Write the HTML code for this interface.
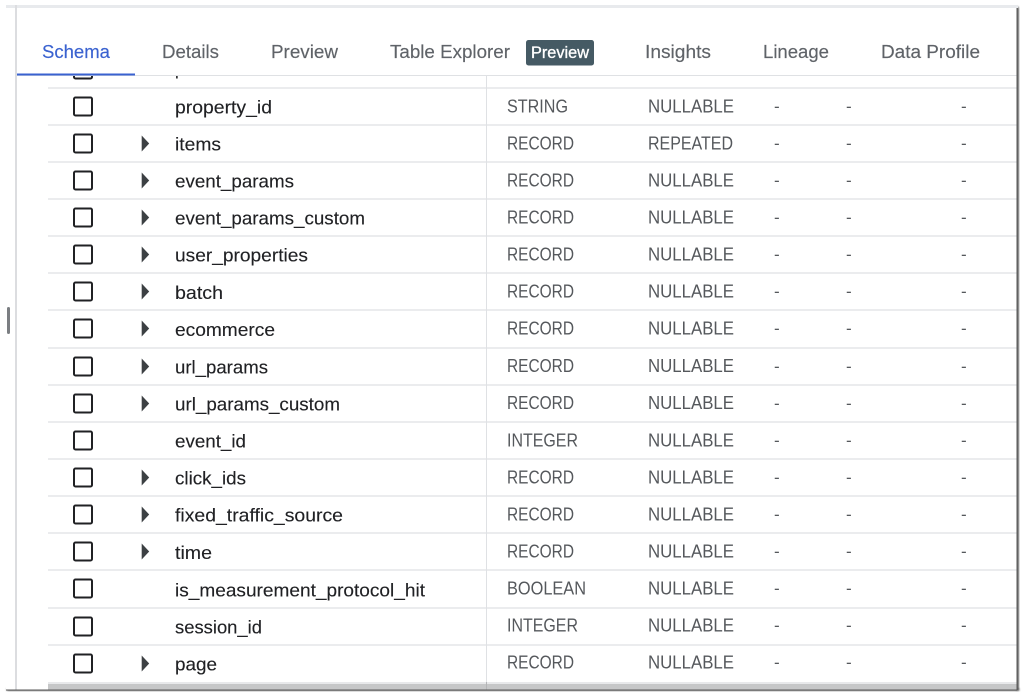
<!DOCTYPE html>
<html lang="en">
<head>
<meta charset="utf-8">
<title>Schema</title>
<style>
html,body{margin:0;padding:0;background:#fff;width:1024px;height:696px;overflow:hidden}
svg{display:block}
text{font-family:"Liberation Sans",sans-serif}
.tab{font-size:18.5px;fill:#5f6368;stroke:#5f6368;stroke-width:.15px}
.n{font-size:18px;fill:#202124;stroke:#202124;stroke-width:.12px;transform:translateY(.6px)}
.t{font-size:18.5px;fill:#55585c;transform:translateY(.4px)}
.d{font-size:17px;fill:#55585c}
.l{stroke:#dfe1e4;stroke-width:1.2}
</style>
</head>
<body>
<svg width="1024" height="696" viewBox="0 0 1024 696" xmlns="http://www.w3.org/2000/svg">
<defs>
<filter id="sh" x="-2%" y="-2%" width="104%" height="104%"><feGaussianBlur stdDeviation="1"/></filter>
<g id="c"><rect x="74" y="9.5" width="18" height="18" rx="1.5" fill="#fff" stroke="#202124" stroke-width="2"/></g>
<path id="a" d="M141.7 10.5 L149.2 18.5 L141.7 26.5 Z" fill="#3c4043"/>
<clipPath id="top"><rect x="16" y="76" width="1000" height="14"/></clipPath>
</defs>

<!-- window -->
<rect x="6" y="5" width="1012" height="3" fill="#e8eaed"/>
<rect x="7" y="688" width="1012" height="3" fill="#555" filter="url(#sh)"/>
<rect x="1016" y="7" width="3" height="683" fill="#555" filter="url(#sh)"/>
<rect x="6" y="7" width="1011" height="683" fill="#fff"/>
<rect x="6" y="5" width="1012" height="3" fill="#e8eaed"/>
<rect x="15" y="5" width="2" height="685" fill="#dcdde0"/>
<rect x="7" y="307" width="3" height="27" rx="1.5" fill="#7b7e82"/>

<!-- tabs -->
<text class="tab" x="42" y="58" textLength="68" lengthAdjust="spacingAndGlyphs" style="fill:#3a62d0;stroke:#3a62d0">Schema</text>
<text class="tab" x="162" y="58" textLength="57" lengthAdjust="spacingAndGlyphs">Details</text>
<text class="tab" x="271" y="58" textLength="67" lengthAdjust="spacingAndGlyphs">Preview</text>
<text class="tab" x="390" y="58" textLength="120" lengthAdjust="spacingAndGlyphs">Table Explorer</text>
<rect x="526" y="40" width="68" height="25.5" rx="2.5" fill="#455a64"/>
<text x="531" y="58" font-size="16.5" fill="#fff" stroke="#fff" stroke-width=".35" textLength="58" lengthAdjust="spacingAndGlyphs">Preview</text>
<text class="tab" x="645" y="58" textLength="66" lengthAdjust="spacingAndGlyphs">Insights</text>
<text class="tab" x="763" y="58" textLength="66" lengthAdjust="spacingAndGlyphs">Lineage</text>
<text class="tab" x="881" y="58" textLength="99" lengthAdjust="spacingAndGlyphs">Data Profile</text>
<rect x="17" y="75" width="1000" height="1" fill="#dfe1e4"/>
<rect x="17" y="73.5" width="118" height="2" fill="#3a62d0"/>

<!-- clipped top row -->
<g clip-path="url(#top)">
<use href="#c" y="51"/>
<text class="n" x="175" y="74" textLength="47" lengthAdjust="spacingAndGlyphs">parent</text>
</g>

<!-- rows -->
<g transform="translate(0,88)"><line class="l" x1="48" x2="1017" y1="0" y2="0"/><use href="#c"/><text class="n" x="175" y="25" textLength="97" lengthAdjust="spacingAndGlyphs">property_id</text><text class="t" x="507" y="24" textLength="61" lengthAdjust="spacingAndGlyphs">STRING</text><text class="t" x="648" y="24" textLength="86" lengthAdjust="spacingAndGlyphs">NULLABLE</text><text class="d" x="774" y="24">-</text><text class="d" x="846" y="24">-</text><text class="d" x="961" y="24">-</text></g>
<g transform="translate(0,125)"><line class="l" x1="48" x2="1017" y1="0" y2="0"/><use href="#c"/><use href="#a"/><text class="n" x="175" y="25" textLength="46" lengthAdjust="spacingAndGlyphs">items</text><text class="t" x="507" y="24" textLength="67" lengthAdjust="spacingAndGlyphs">RECORD</text><text class="t" x="648" y="24" textLength="85" lengthAdjust="spacingAndGlyphs">REPEATED</text><text class="d" x="774" y="24">-</text><text class="d" x="846" y="24">-</text><text class="d" x="961" y="24">-</text></g>
<g transform="translate(0,162)"><line class="l" x1="48" x2="1017" y1="0" y2="0"/><use href="#c"/><use href="#a"/><text class="n" x="175" y="25" textLength="119" lengthAdjust="spacingAndGlyphs">event_params</text><text class="t" x="507" y="24" textLength="67" lengthAdjust="spacingAndGlyphs">RECORD</text><text class="t" x="648" y="24" textLength="86" lengthAdjust="spacingAndGlyphs">NULLABLE</text><text class="d" x="774" y="24">-</text><text class="d" x="846" y="24">-</text><text class="d" x="961" y="24">-</text></g>
<g transform="translate(0,199)"><line class="l" x1="48" x2="1017" y1="0" y2="0"/><use href="#c"/><use href="#a"/><text class="n" x="175" y="25" textLength="190" lengthAdjust="spacingAndGlyphs">event_params_custom</text><text class="t" x="507" y="24" textLength="67" lengthAdjust="spacingAndGlyphs">RECORD</text><text class="t" x="648" y="24" textLength="86" lengthAdjust="spacingAndGlyphs">NULLABLE</text><text class="d" x="774" y="24">-</text><text class="d" x="846" y="24">-</text><text class="d" x="961" y="24">-</text></g>
<g transform="translate(0,236)"><line class="l" x1="48" x2="1017" y1="0" y2="0"/><use href="#c"/><use href="#a"/><text class="n" x="175" y="25" textLength="133" lengthAdjust="spacingAndGlyphs">user_properties</text><text class="t" x="507" y="24" textLength="67" lengthAdjust="spacingAndGlyphs">RECORD</text><text class="t" x="648" y="24" textLength="86" lengthAdjust="spacingAndGlyphs">NULLABLE</text><text class="d" x="774" y="24">-</text><text class="d" x="846" y="24">-</text><text class="d" x="961" y="24">-</text></g>
<g transform="translate(0,273)"><line class="l" x1="48" x2="1017" y1="0" y2="0"/><use href="#c"/><use href="#a"/><text class="n" x="175" y="25.5" textLength="48" lengthAdjust="spacingAndGlyphs">batch</text><text class="t" x="507" y="24" textLength="67" lengthAdjust="spacingAndGlyphs">RECORD</text><text class="t" x="648" y="24" textLength="86" lengthAdjust="spacingAndGlyphs">NULLABLE</text><text class="d" x="774" y="24">-</text><text class="d" x="846" y="24">-</text><text class="d" x="961" y="24">-</text></g>
<g transform="translate(0,310)"><line class="l" x1="48" x2="1017" y1="0" y2="0"/><use href="#c"/><use href="#a"/><text class="n" x="175" y="25.5" textLength="100" lengthAdjust="spacingAndGlyphs">ecommerce</text><text class="t" x="507" y="24" textLength="67" lengthAdjust="spacingAndGlyphs">RECORD</text><text class="t" x="648" y="24" textLength="86" lengthAdjust="spacingAndGlyphs">NULLABLE</text><text class="d" x="774" y="24">-</text><text class="d" x="846" y="24">-</text><text class="d" x="961" y="24">-</text></g>
<g transform="translate(0,348)"><line class="l" x1="48" x2="1017" y1="0" y2="0"/><use href="#c"/><use href="#a"/><text class="n" x="175" y="25" textLength="93" lengthAdjust="spacingAndGlyphs">url_params</text><text class="t" x="507" y="23.5" textLength="67" lengthAdjust="spacingAndGlyphs">RECORD</text><text class="t" x="648" y="23.5" textLength="86" lengthAdjust="spacingAndGlyphs">NULLABLE</text><text class="d" x="774" y="24">-</text><text class="d" x="846" y="24">-</text><text class="d" x="961" y="24">-</text></g>
<g transform="translate(0,385)"><line class="l" x1="48" x2="1017" y1="0" y2="0"/><use href="#c"/><use href="#a"/><text class="n" x="175" y="25" textLength="165" lengthAdjust="spacingAndGlyphs">url_params_custom</text><text class="t" x="507" y="23.5" textLength="67" lengthAdjust="spacingAndGlyphs">RECORD</text><text class="t" x="648" y="23.5" textLength="86" lengthAdjust="spacingAndGlyphs">NULLABLE</text><text class="d" x="774" y="24">-</text><text class="d" x="846" y="24">-</text><text class="d" x="961" y="24">-</text></g>
<g transform="translate(0,422)"><line class="l" x1="48" x2="1017" y1="0" y2="0"/><use href="#c"/><text class="n" x="175" y="25" textLength="71" lengthAdjust="spacingAndGlyphs">event_id</text><text class="t" x="507" y="24" textLength="71" lengthAdjust="spacingAndGlyphs">INTEGER</text><text class="t" x="648" y="24" textLength="86" lengthAdjust="spacingAndGlyphs">NULLABLE</text><text class="d" x="774" y="24">-</text><text class="d" x="846" y="24">-</text><text class="d" x="961" y="24">-</text></g>
<g transform="translate(0,459)"><line class="l" x1="48" x2="1017" y1="0" y2="0"/><use href="#c"/><use href="#a"/><text class="n" x="175" y="25" textLength="71" lengthAdjust="spacingAndGlyphs">click_ids</text><text class="t" x="507" y="24" textLength="67" lengthAdjust="spacingAndGlyphs">RECORD</text><text class="t" x="648" y="24" textLength="86" lengthAdjust="spacingAndGlyphs">NULLABLE</text><text class="d" x="774" y="24">-</text><text class="d" x="846" y="24">-</text><text class="d" x="961" y="24">-</text></g>
<g transform="translate(0,496)"><line class="l" x1="48" x2="1017" y1="0" y2="0"/><use href="#c"/><use href="#a"/><text class="n" x="175" y="25" textLength="168" lengthAdjust="spacingAndGlyphs">fixed_traffic_source</text><text class="t" x="507" y="24" textLength="67" lengthAdjust="spacingAndGlyphs">RECORD</text><text class="t" x="648" y="24" textLength="86" lengthAdjust="spacingAndGlyphs">NULLABLE</text><text class="d" x="774" y="24">-</text><text class="d" x="846" y="24">-</text><text class="d" x="961" y="24">-</text></g>
<g transform="translate(0,533)"><line class="l" x1="48" x2="1017" y1="0" y2="0"/><use href="#c"/><use href="#a"/><text class="n" x="175" y="25.5" textLength="37" lengthAdjust="spacingAndGlyphs">time</text><text class="t" x="507" y="24" textLength="67" lengthAdjust="spacingAndGlyphs">RECORD</text><text class="t" x="648" y="24" textLength="86" lengthAdjust="spacingAndGlyphs">NULLABLE</text><text class="d" x="774" y="24">-</text><text class="d" x="846" y="24">-</text><text class="d" x="961" y="24">-</text></g>
<g transform="translate(0,570)"><line class="l" x1="48" x2="1017" y1="0" y2="0"/><use href="#c"/><text class="n" x="175" y="26" textLength="250" lengthAdjust="spacingAndGlyphs">is_measurement_protocol_hit</text><text class="t" x="507" y="24" textLength="79" lengthAdjust="spacingAndGlyphs">BOOLEAN</text><text class="t" x="648" y="24" textLength="86" lengthAdjust="spacingAndGlyphs">NULLABLE</text><text class="d" x="774" y="24">-</text><text class="d" x="846" y="24">-</text><text class="d" x="961" y="24">-</text></g>
<g transform="translate(0,608)"><line class="l" x1="48" x2="1017" y1="0" y2="0"/><use href="#c"/><text class="n" x="175" y="25" textLength="87" lengthAdjust="spacingAndGlyphs">session_id</text><text class="t" x="507" y="23" textLength="71" lengthAdjust="spacingAndGlyphs">INTEGER</text><text class="t" x="648" y="23" textLength="86" lengthAdjust="spacingAndGlyphs">NULLABLE</text><text class="d" x="774" y="23">-</text><text class="d" x="846" y="23">-</text><text class="d" x="961" y="23">-</text></g>
<g transform="translate(0,645)"><line class="l" x1="48" x2="1017" y1="0" y2="0"/><use href="#c"/><use href="#a"/><text class="n" x="175" y="25" textLength="42" lengthAdjust="spacingAndGlyphs">page</text><text class="t" x="507" y="23" textLength="67" lengthAdjust="spacingAndGlyphs">RECORD</text><text class="t" x="648" y="23" textLength="86" lengthAdjust="spacingAndGlyphs">NULLABLE</text><text class="d" x="774" y="23">-</text><text class="d" x="846" y="23">-</text><text class="d" x="961" y="23">-</text></g>

<!-- bottom scrollbar -->
<rect x="48" y="682" width="969" height="2" fill="#e8e9eb"/>
<rect x="48" y="684" width="969" height="5.5" fill="#c6c7c8"/>

<!-- column divider -->
<rect x="486" y="76" width="1" height="606" fill="#dfe1e4"/>
<rect x="486" y="682" width="1" height="8" fill="#b4b5b7"/>

<rect x="6" y="689.5" width="1011" height="1" fill="#5a5a5a"/>
<rect x="1016.5" y="8" width="1.2" height="682" fill="#5a5a5a"/>
</svg>
</body>
</html>
